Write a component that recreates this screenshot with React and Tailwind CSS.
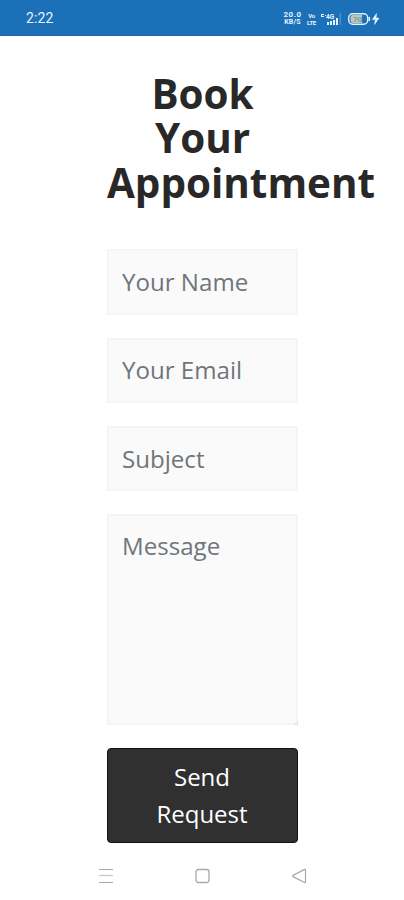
import React from 'react'

const FIELDS = [
  { name: 'name', type: 'text', placeholder: 'Your Name', size: 'h-[66px]' },
  { name: 'email', type: 'email', placeholder: 'Your Email', size: 'h-[65px] pb-px' },
  { name: 'subject', type: 'text', placeholder: 'Subject', size: 'h-[65px]' },
]

const fieldClass =
  'block w-full border-2 border-[#f5f5f5] bg-[#fafafa] px-[13px] text-[24.1px] text-[#2d2d2d] placeholder:text-[#70757b] placeholder:opacity-100 outline-none focus:border-gray-300'

function StatusBar() {
  return (
    <header className="flex h-9 items-center justify-between border-b border-[#1766a8] bg-[#1b70b8] pl-[26px] pr-6 text-[#e5f3ff]">
      <span className="pt-0.5 font-['Roboto',sans-serif] text-[14px] tracking-[0.1px]">2:22</span>
      <div className="flex items-center pt-0.5 font-['Roboto',sans-serif] font-bold">
        {/* Network speed */}
        <div className="w-[19px] text-center text-[7px] leading-[7px]">
          <p className="text-[8px] leading-[8px] tracking-[0.5px]">20.0</p>
          <p className="tracking-[0.2px]">KB/S</p>
        </div>
        {/* VoLTE */}
        <div className="ml-[5px] w-[9px] text-center text-[6px] leading-[7px] tracking-[-0.3px]">
          <p>Vo</p>
          <p>LTE</p>
        </div>
        <svg className="ml-[5px] h-[14px] w-[20px]" viewBox="0 0 20 14" fill="currentColor">
          <path d="M0 2h3v1H1v1h2v1H0zM4 3h1v1H4z" />
          <text x="5" y="6.5" fontSize="6.5">4G</text>
          <path d="M6 10h2v3H6zM9 9h2v4H9zM12 8h2v5h-2zM15 6h2v7h-2z" />
          <path d="M18.8 1h.7v12h-.7z" opacity=".5" />
        </svg>
        {/* Battery, charging */}
        <svg className="ml-[7px] h-[14px] w-[32px]" viewBox="0 0 32 14" fill="none">
          <rect x=".7" y="1.7" width="19" height="10.6" rx="4" stroke="currentColor" strokeWidth="1.4" />
          <path d="M5 3h9v8H5a2.5 2.5 0 0 1-2.5-2.5v-3A2.5 2.5 0 0 1 5 3Z" fill="#b9cbb4" />
          <text x="5" y="10" fontSize="8" fill="#769caa">70</text>
          <path d="M21.3 5.5v3" stroke="currentColor" strokeWidth="1.5" strokeLinecap="round" />
          <path d="m28.5 1.5-4.2 6h3L26.5 12.5l4.6-6.5h-3z" fill="currentColor" stroke="currentColor" strokeWidth=".5" />
        </svg>
      </div>
    </header>
  )
}

function NavBar() {
  return (
    <nav className="mt-[21px] flex h-6 items-center justify-between pl-[98px] pr-[97px] text-[#a9a9a9]">
      <svg className="size-4" viewBox="0 0 16 16" stroke="currentColor" strokeWidth="1.2">
        <path d="M1 1.5h14M1 14.5h14" />
        <path d="M1 7.5h14" opacity=".65" />
      </svg>
      <svg className="size-4" viewBox="0 0 16 16" fill="none" stroke="currentColor" strokeWidth="1.3">
        <rect x="1" y="1.5" width="13" height="13" rx="2.5" />
      </svg>
      <svg className="size-4" viewBox="0 0 16 16" fill="none" stroke="currentColor" strokeWidth="1.2" strokeLinejoin="round">
        <path d="M14.5 2v12q0 .9-.9.5L2 8.6Q1 8 2 7.4l11.6-6q.9-.4.9.6z" />
      </svg>
    </nav>
  )
}

export default function App() {
  return (
    <div className="min-h-[900px] w-[404px] overflow-hidden bg-white font-['Open_Sans',sans-serif]">
      <StatusBar />
      <main className="ml-[107px] w-[191px] pt-9">
        <h1 className="text-center text-[40.4px] leading-[44.3px] font-bold text-[#282828]">
          Book Your Appointment
        </h1>
        <form className="mt-11" onSubmit={e => e.preventDefault()}>
          <div className="space-y-[23px]">
            {FIELDS.map(field => (
              <input
                key={field.name}
                name={field.name}
                type={field.type}
                placeholder={field.placeholder}
                className={`${fieldClass} ${field.size}`}
              />
            ))}
            {/* Resize grip shows as a faint mark in the corner */}
            <div className="relative">
              <textarea
                name="message"
                placeholder="Message"
                className={`${fieldClass} h-[211px] resize-none py-3 leading-[36px]`}
              />
              <span className="absolute right-0 bottom-0 size-1 border-r border-b border-[#dedede]" />
            </div>
          </div>
          <button
            type="submit"
            className="mt-[23px] h-[95px] w-full rounded-[4px] border-[1.5px] border-[#111111] bg-[#303030] pr-[33px] pl-8 text-[24px] leading-[37px] text-white"
          >
            Send Request
          </button>
        </form>
      </main>
      <NavBar />
    </div>
  )
}
